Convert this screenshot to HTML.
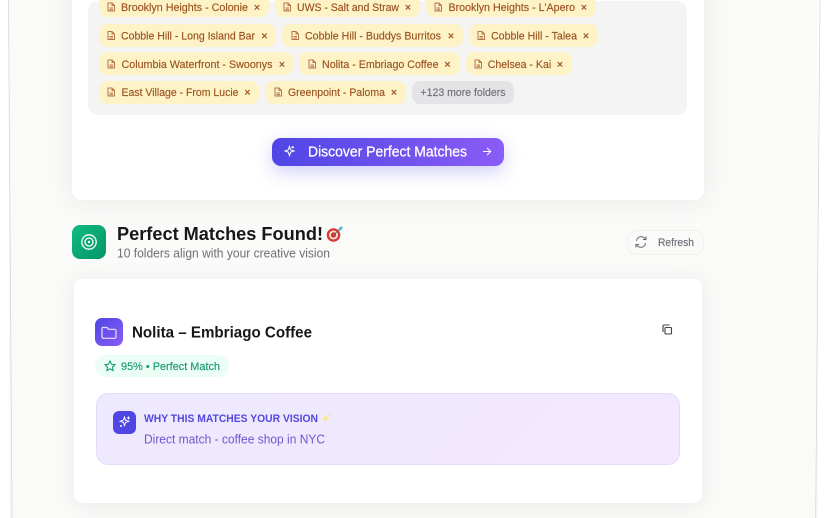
<!DOCTYPE html>
<html><head><meta charset="utf-8"><style>
html,body{margin:0;padding:0;width:828px;height:518px;overflow:hidden;background:#fff}
.a{position:absolute;box-sizing:border-box}
#bg{left:9px;top:0;width:809px;height:518px;background:#fafaf9}
#c1{left:72px;top:-40px;width:632px;height:239.500px;background:#fff;border-radius:10px;box-shadow:0 2px 28px rgba(0,0,0,.07)}
#panel{left:88px;top:1px;width:599px;height:113.500px;background:#f4f4f5;border-radius:10px}
.t{background:#fef3c7;border-radius:8px;height:23px}
#btn{left:271.500px;top:137.500px;width:232px;height:28px;border-radius:9px;background:linear-gradient(90deg,#4f46e5,#8b5cf6);box-shadow:0 6px 18px rgba(79,70,229,.26)}
#ic1{left:72px;top:225px;width:34px;height:34px;border-radius:8px;background:linear-gradient(135deg,#10b981,#059669)}
#ref{left:626.500px;top:229.500px;width:77px;height:25px;border:1px solid #f0f0ee;border-radius:10px;background:#fafaf9}
#c2{left:74px;top:279px;width:627.500px;height:224px;background:#fff;border-radius:8px;box-shadow:0 2px 24px rgba(0,0,0,.07)}
#ic2{left:95px;top:318px;width:28px;height:28px;border-radius:7px;background:linear-gradient(135deg,#4f46e5,#8b5cf6)}
#bd{left:95px;top:355px;width:133.500px;height:22px;border-radius:11px;background:#ecfdf5}
#why{left:96px;top:393px;width:584px;height:71.500px;border-radius:12px;border:1px solid #e4dcfd;background:linear-gradient(135deg,#ede9fe,#f3e8ff)}
#ic3{left:113px;top:411px;width:23px;height:23px;border-radius:6px;background:#4f46e5}
svg{position:absolute;left:0;top:0;filter:blur(.25px)}
text{font-family:"Liberation Sans",sans-serif}
.l{font-size:11px;fill:#9a5220;stroke:#9a5220;stroke-width:.15}
.x{font-size:11px;fill:#9a5220;stroke:#9a5220;stroke-width:.3;text-anchor:middle}
.d{fill:none;stroke:#b5764a;stroke-width:1}
</style></head><body>
<div class="a" id="bg"></div>
<div class="a" id="c1"></div>
<div class="a" id="panel"></div>
<div class="a t" style="left:99px;top:-6px;width:170px"></div>
<div class="a t" style="left:275px;top:-6px;width:145px"></div>
<div class="a t" style="left:426px;top:-6px;width:170px"></div>
<div class="a t" style="left:99px;top:24px;width:177px"></div>
<div class="a t" style="left:282px;top:24px;width:180.500px"></div>
<div class="a t" style="left:469px;top:24px;width:129px"></div>
<div class="a t" style="left:99px;top:52px;width:194px"></div>
<div class="a t" style="left:299px;top:52px;width:160.500px"></div>
<div class="a t" style="left:465.500px;top:52px;width:106px"></div>
<div class="a t" style="left:99px;top:81px;width:160px"></div>
<div class="a t" style="left:265px;top:81px;width:140.500px"></div>
<div class="a t" style="left:411.500px;top:81px;width:102.500px;background:#e4e4e7"></div>
<div class="a" id="btn"></div>
<div class="a" id="ic1"></div>
<div class="a" id="ref"></div>
<div class="a" id="c2"></div>
<div class="a" id="ic2"></div>
<div class="a" id="bd"></div>
<div class="a" id="why"></div>
<div class="a" id="ic3"></div>
<svg width="828" height="518" viewBox="0 0 828 518">
<defs><g id="doc"><path class="d" d="M-3-4H1L3.500-1.500V4H-3ZM1-4V-1.500H3.500M-1.500 1H2M-1.500 2.600H2"/></g></defs>
<path d="M8.500 0C9.500 170 10 340 12 518" fill="none" stroke="#d6d6d6" stroke-width=".8"/>
<path d="M820 0C819.500 170 817 340 815.700 518" fill="none" stroke="#d6d6d6" stroke-width=".8"/>

<use href="#doc" x="111" y="7"/><use href="#doc" x="287" y="7"/><use href="#doc" x="438" y="7"/>
<use href="#doc" x="111" y="35.500"/><use href="#doc" x="295" y="35.500"/><use href="#doc" x="481" y="35.500"/>
<use href="#doc" x="111" y="64"/><use href="#doc" x="312" y="64"/><use href="#doc" x="478" y="64"/>
<use href="#doc" x="111" y="92"/><use href="#doc" x="278" y="92"/>

<text class="l" x="121" y="11" textLength="127" lengthAdjust="spacingAndGlyphs">Brooklyn Heights - Colonie</text><text class="x" x="257" y="10.800">×</text>
<text class="l" x="297" y="11" textLength="102" lengthAdjust="spacingAndGlyphs">UWS - Salt and Straw</text><text class="x" x="408" y="10.800">×</text>
<text class="l" x="448.500" y="11" textLength="126.500" lengthAdjust="spacingAndGlyphs">Brooklyn Heights - L'Apero</text><text class="x" x="584" y="10.800">×</text>
<text class="l" x="121" y="39.500" textLength="134" lengthAdjust="spacingAndGlyphs">Cobble Hill - Long Island Bar</text><text class="x" x="264.500" y="39.300">×</text>
<text class="l" x="305" y="39.500" textLength="136" lengthAdjust="spacingAndGlyphs">Cobble Hill - Buddys Burritos</text><text class="x" x="451" y="39.300">×</text>
<text class="l" x="491" y="39.500" textLength="86" lengthAdjust="spacingAndGlyphs">Cobble Hill - Talea</text><text class="x" x="586" y="39.300">×</text>
<text class="l" x="121.500" y="68" textLength="151" lengthAdjust="spacingAndGlyphs">Columbia Waterfront - Swoonys</text><text class="x" x="282" y="67.800">×</text>
<text class="l" x="322" y="68" textLength="116.500" lengthAdjust="spacingAndGlyphs">Nolita - Embriago Coffee</text><text class="x" x="447.500" y="67.800">×</text>
<text class="l" x="487.700" y="68" textLength="63.500" lengthAdjust="spacingAndGlyphs">Chelsea - Kai</text><text class="x" x="560" y="67.800">×</text>
<text class="l" x="121.500" y="96" textLength="117" lengthAdjust="spacingAndGlyphs">East Village - From Lucie</text><text class="x" x="247.500" y="95.800">×</text>
<text class="l" x="288" y="96" textLength="97" lengthAdjust="spacingAndGlyphs">Greenpoint - Paloma</text><text class="x" x="394" y="95.800">×</text>
<text x="420.500" y="96" font-size="11" fill="#6f6f78" stroke="#6f6f78" stroke-width=".15" textLength="85" lengthAdjust="spacingAndGlyphs">+123 more folders</text>

<path d="M289.500 146.500l1.200 3.300 3.300 1.200-3.300 1.200-1.200 3.300-1.200-3.300-3.300-1.200 3.300-1.200zM292.800 146v2.500M291.500 147.200h2.500" fill="none" stroke="#fff" stroke-width="1"/>
<text x="308" y="156.300" font-size="14.500" fill="#fff" stroke="#fff" stroke-width=".25" textLength="159" lengthAdjust="spacingAndGlyphs">Discover Perfect Matches</text>
<path d="M483 151.500h7.500M487 147.800l3.700 3.700-3.700 3.700" fill="none" stroke="#fff" stroke-width="1"/>

<circle cx="89" cy="242" r="7.200" fill="none" stroke="#fff" stroke-width="1.300"/><circle cx="89" cy="242" r="4" fill="none" stroke="#fff" stroke-width="1.300"/><circle cx="89" cy="242" r="1.200" fill="#fff"/>
<text x="117" y="239.800" font-size="18.500" font-weight="700" fill="#171717" textLength="206" lengthAdjust="spacingAndGlyphs">Perfect Matches Found!</text>
<circle cx="333.500" cy="235" r="6.800" fill="#d8382f"/><circle cx="333.500" cy="235" r="4.500" fill="#f3e3de"/><circle cx="333.500" cy="235" r="2.700" fill="#d8382f"/>
<path d="M334 234.500l6-5.500" stroke="#5b6b75" stroke-width="1"/><path d="M338.500 229l2-2.500 2.500.5-1 2-2 2z" fill="#4fb6d6"/>
<text x="117" y="257.300" font-size="13" fill="#6f6f78" textLength="213" lengthAdjust="spacingAndGlyphs">10 folders align with your creative vision</text>

<path d="M636.500 241a4.700 4.700 0 0 1 8-3l1.500 1.500M646 236.500v3h-3M645.500 243a4.700 4.700 0 0 1-8 3l-1.500-1.500M636 247.500v-3h3" fill="none" stroke="#6b6b73" stroke-width="1"/>
<text x="658" y="245.800" font-size="11" fill="#6f6f78" stroke="#6f6f78" stroke-width=".15" textLength="36" lengthAdjust="spacingAndGlyphs">Refresh</text>

<path d="M102.500 327.500h4.500l1.500 1.800h6a1.500 1.500 0 0 1 1.500 1.500v6a1.500 1.500 0 0 1-1.500 1.500h-11a1.500 1.500 0 0 1-1.500-1.500v-8.300a1 1 0 0 1 .500-1z" fill="none" stroke="#e9e5ff" stroke-width="1.200"/>
<text x="132" y="337.300" font-size="15.500" font-weight="700" fill="#171717" textLength="180" lengthAdjust="spacingAndGlyphs">Nolita – Embriago Coffee</text>
<rect x="665" y="327.500" width="6.500" height="6.500" rx="1" fill="none" stroke="#404040" stroke-width="1.100"/><path d="M663 332v-6a1 1 0 0 1 1-1h5.500" fill="none" stroke="#404040" stroke-width="1.100"/>
<path d="M110 361l1.500 3.200 3.500.5-2.500 2.400.6 3.400-3.100-1.700-3.100 1.700.6-3.400-2.500-2.400 3.500-.5z" fill="none" stroke="#059669" stroke-width="1"/>
<text x="121" y="369.800" font-size="11" fill="#1a9a70" stroke="#1a9a70" stroke-width=".15" textLength="99" lengthAdjust="spacingAndGlyphs">95% • Perfect Match</text>

<path d="M124.500 417l1.100 3.200 3.200 1.100-3.200 1.100-1.100 3.200-1.100-3.200-3.200-1.100 3.200-1.100zM128.500 416.500v3M127 418h3M121 425v2M120 426h2" fill="none" stroke="#fff" stroke-width="1"/>
<text x="144" y="422" font-size="11" font-weight="700" fill="#5347de" textLength="174" lengthAdjust="spacingAndGlyphs">WHY THIS MATCHES YOUR VISION</text>
<path d="M325.500 414l1.200 3.300 3.300 1.200-3.300 1.200-1.200 3.300-1.200-3.300-3.300-1.200 3.300-1.200z" fill="#fde68a"/><path d="M329.500 413l.5 1.300 1.300.5-1.300.5-.5 1.300-.5-1.300-1.300-.5 1.300-.5z" fill="#fde68a"/>
<text x="144" y="443.500" font-size="12.500" fill="#7355cc" textLength="181" lengthAdjust="spacingAndGlyphs">Direct match - coffee shop in NYC</text>
</svg>
</body></html>
